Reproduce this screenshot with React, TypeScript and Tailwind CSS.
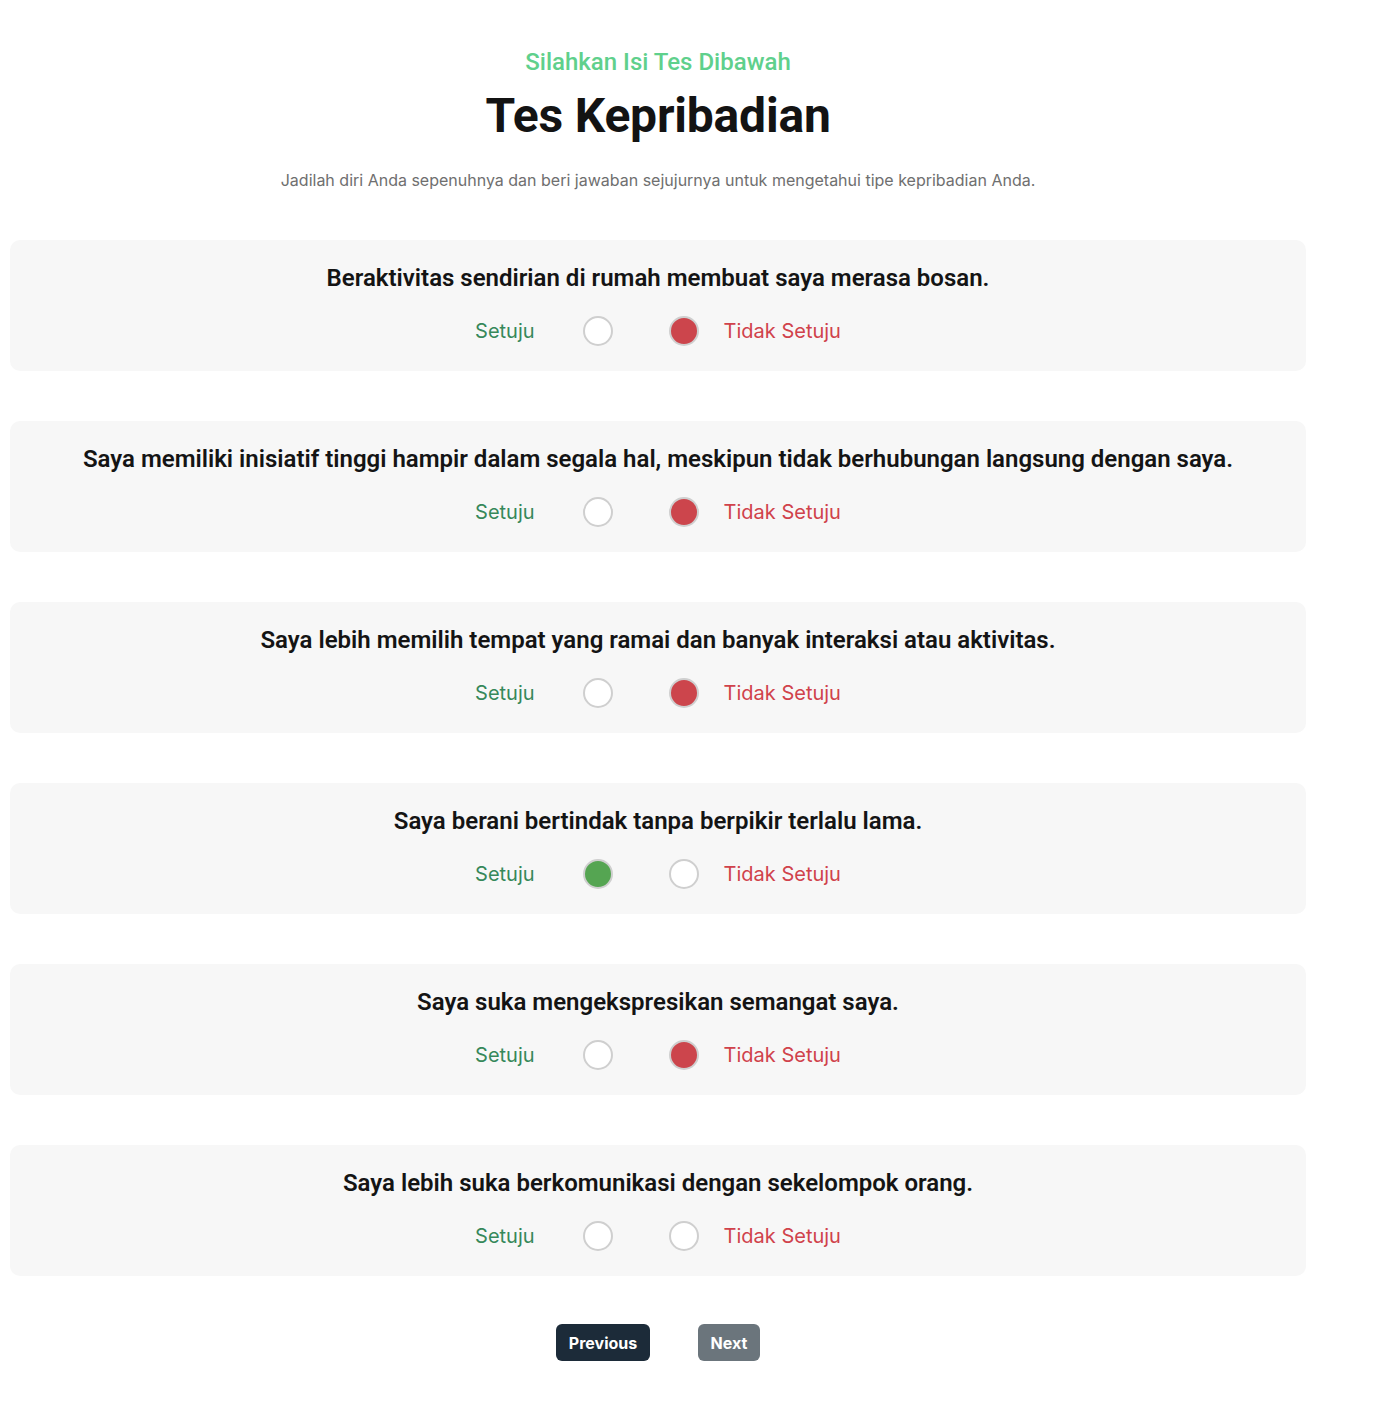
import { useState } from 'react'

const questions = [
  'Beraktivitas sendirian di rumah membuat saya merasa bosan.',
  'Saya memiliki inisiatif tinggi hampir dalam segala hal, meskipun tidak berhubungan langsung dengan saya.',
  'Saya lebih memilih tempat yang ramai dan banyak interaksi atau aktivitas.',
  'Saya berani bertindak tanpa berpikir terlalu lama.',
  'Saya suka mengekspresikan semangat saya.',
  'Saya lebih suka berkomunikasi dengan sekelompok orang.',
]

export default function App() {
  const [answers, setAnswers] = useState<(string | null)[]>(['no', 'no', 'no', 'yes', 'no', null])

  const pick = (i: number, v: string) => {
    const next = [...answers]
    next[i] = v
    setAnswers(next)
  }

  return (
    <div className="min-h-screen bg-white">
      <div className="w-[1316px] px-[10px] pt-[49px] pb-10">
        {/* HEADER */}
        <div className="text-center">
          <p className="font-['Roboto',sans-serif] text-[24px] leading-[26px] font-medium text-[#5fd08c]">Silahkan Isi Tes Dibawah</p>
          <h1 className="mt-[13px] font-['Roboto',sans-serif] text-[48px] leading-[56px] font-bold text-[#131313] tracking-[-0.2px]">Tes Kepribadian</h1>
          <p className="mt-[26px] font-['Inter',sans-serif] text-[16px] leading-[20px] text-[#6f6f6f]">
            Jadilah diri Anda sepenuhnya dan beri jawaban sejujurnya untuk mengetahui tipe kepribadian Anda.
          </p>
        </div>

        {/* QUESTIONS */}
        <div className="mt-[50px] flex flex-col gap-[50px]">
          {questions.map((q, i) => (
            <div key={i} className="bg-[#f7f7f7] rounded-[10px] pt-[23px] pb-[25px] px-4">
              <h3 className="text-center font-['Roboto',sans-serif] text-[24px] leading-[30px] font-semibold text-[#141414]">{q}</h3>
              <div className="mt-[23px] flex items-center justify-center font-['Inter',sans-serif] text-[20px] leading-[30px] whitespace-nowrap">
                <span className="text-[#36885a]">Setuju</span>
                <button
                  onClick={() => pick(i, 'yes')}
                  className={`ml-[48px] w-[30px] h-[30px] rounded-full border-2 border-[#cfcfcf] ${answers[i] === 'yes' ? 'bg-[#55a552]' : 'bg-white'}`}
                />
                <button
                  onClick={() => pick(i, 'no')}
                  className={`ml-[56px] w-[30px] h-[30px] rounded-full border-2 border-[#cfcfcf] ${answers[i] === 'no' ? 'bg-[#cc454c]' : 'bg-white'}`}
                />
                <span className="ml-[25px] text-[#d0424b]">Tidak Setuju</span>
              </div>
            </div>
          ))}
        </div>

        {/* NAV */}
        <div className="mt-[48px] flex justify-center gap-[48px] font-['Inter',sans-serif]">
          <button className="h-[37px] w-[94px] rounded-[6px] bg-[#1c2b39] text-white text-[16px] font-bold">Previous</button>
          <button className="h-[37px] w-[62px] rounded-[6px] bg-[#6b757c] text-white text-[16px] font-bold">Next</button>
        </div>
      </div>
    </div>
  )
}
